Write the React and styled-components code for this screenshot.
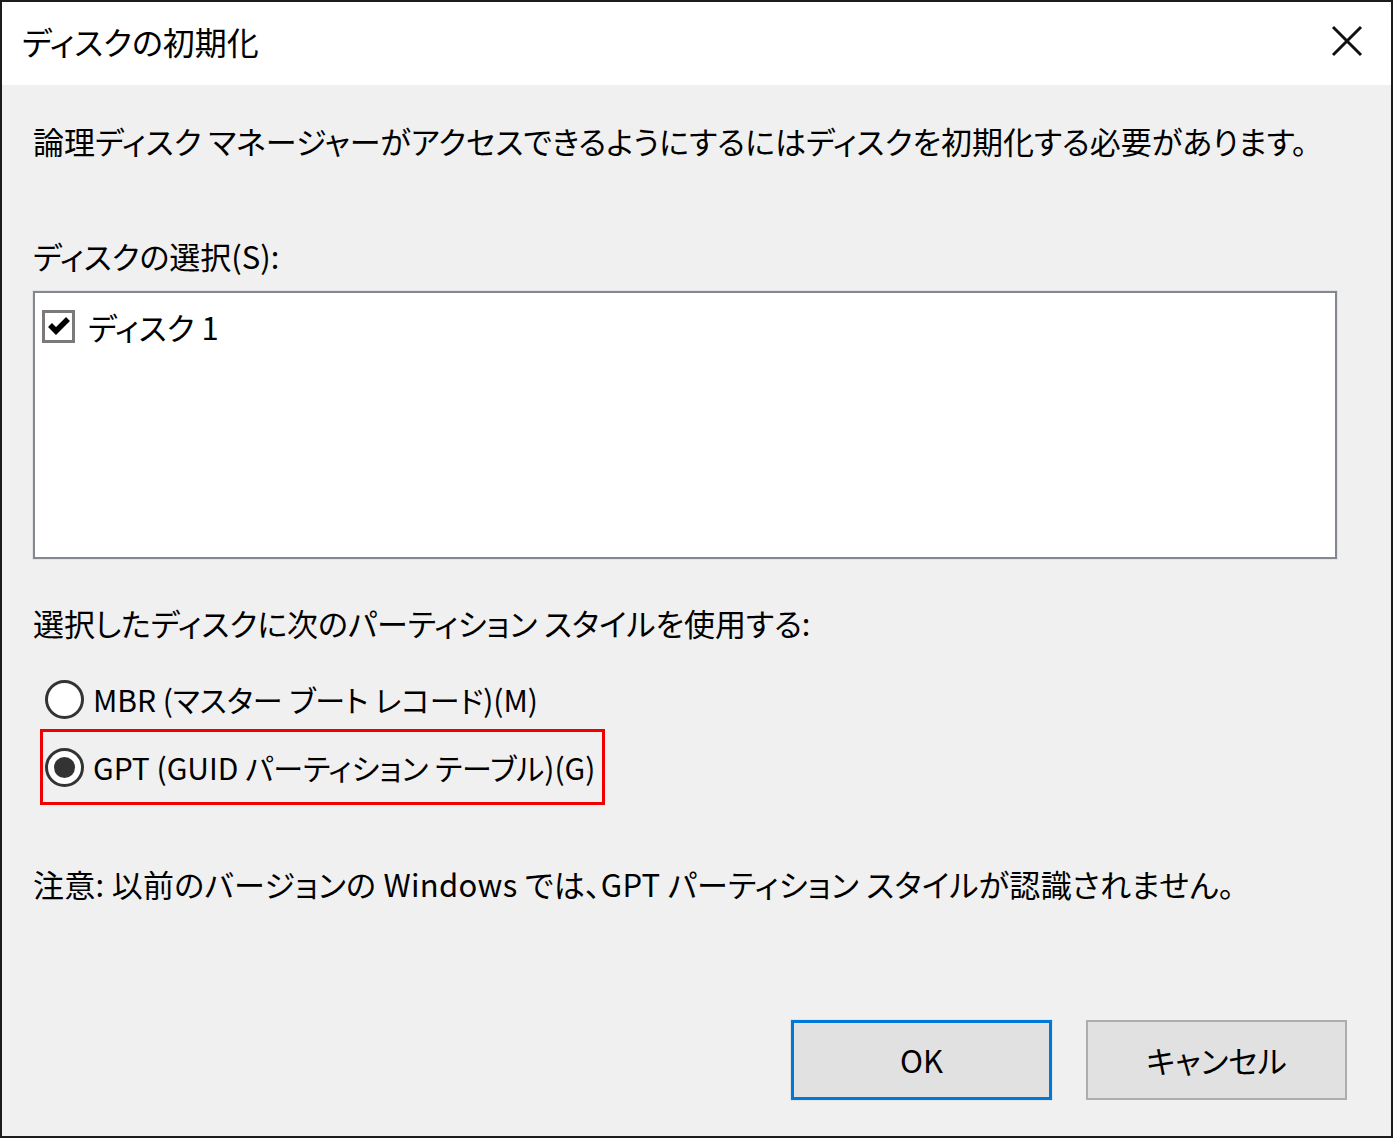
import React from "react";
import styled, { createGlobalStyle } from "styled-components";

const Global = createGlobalStyle`
  html, body { margin: 0; padding: 0; background: #ffffff; }
  * { box-sizing: border-box; }
  body {
    font-family: "Noto Sans CJK JP", "Noto Sans", sans-serif;
    font-feature-settings: "palt";
    color: #000;
  }
`;

const Frame = styled.div`
  width: 1393px;
  height: 1138px;
  border: 2px solid #1c1c1c;
  display: flex;
  flex-direction: column;
  background: #f0f0f0;
`;

const TitleBar = styled.div`
  height: 83px;
  background: #ffffff;
  display: flex;
  align-items: center;
  justify-content: space-between;
  padding: 0 28px 6px 20px;
  flex-shrink: 0;
`;

const Title = styled.div`
  font-size: 32px;
  line-height: 40px;
`;

const CloseIcon = styled.svg`
  width: 32px;
  height: 32px;
  display: block;
`;

const Body = styled.div`
  flex: 1;
  display: flex;
  flex-direction: column;
  padding: 36px 44px 36px 31px;
`;

const Text = styled.div`
  font-size: 31px;
  line-height: 40px;
  margin-top: ${(p) => p.$mt || 0}px;
  letter-spacing: ${(p) => p.$ls || 0}px;
  white-space: nowrap;
`;

const ListBox = styled.div`
  margin-top: 15px;
  width: 1304px;
  height: 268px;
  background: #ffffff;
  border: 2px solid #838890;
  outline: 1px solid #e2e2e2;
  padding: 15px 7px;
`;

const ListItem = styled.div`
  display: flex;
  align-items: center;
  gap: 13px;
  height: 36px;
  font-size: 31px;
`;

const CheckBox = styled.div`
  width: 33px;
  height: 33px;
  border: 3px solid #7a7a7a;
  background: #fff;
  display: flex;
  align-items: center;
  justify-content: center;
`;

const RadioRow = styled.div`
  display: flex;
  align-items: center;
  gap: 9px;
  height: 46px;
  margin-top: ${(p) => p.$mt || 0}px;
  margin-left: ${(p) => p.$ml || 0}px;
  font-size: 30px;
  white-space: nowrap;
`;

const Highlight = styled.div`
  margin-top: 7px;
  margin-left: 7px;
  width: 565px;
  height: 76px;
  border: 3px solid #f00000;
  padding-left: 2px;
  display: flex;
  align-items: center;
`;

const Radio = styled.div`
  width: 39px;
  height: 39px;
  border-radius: 50%;
  border: 3px solid #333333;
  background: #ffffff;
  display: flex;
  align-items: center;
  justify-content: center;
  flex-shrink: 0;
  &::after {
    content: "";
    display: ${(p) => (p.$checked ? "block" : "none")};
    width: 21px;
    height: 21px;
    border-radius: 50%;
    background: #333333;
  }
`;

const ButtonRow = styled.div`
  margin-top: auto;
  display: flex;
  justify-content: flex-end;
  gap: 34px;
`;

const Button = styled.div`
  width: 261px;
  height: 80px;
  background: #e1e1e1;
  border: ${(p) => (p.$primary ? "3px solid #0078d7" : "2px solid #adadad")};
  outline: ${(p) => (p.$primary ? "1px solid #e5e5e5" : "none")};
  display: flex;
  align-items: center;
  justify-content: center;
  font-size: 31px;
  padding-bottom: 2px;
`;

export default function App() {
  return (
    <>
      <Global />
      <Frame>
        <TitleBar>
          <Title>ディスクの初期化</Title>
          <CloseIcon viewBox="0 0 32 32">
            <path d="M2 2 L30 30 M30 2 L2 30" stroke="#111" strokeWidth="3" fill="none" />
          </CloseIcon>
        </TitleBar>
        <Body>
          <Text>論理ディスク マネージャーがアクセスできるようにするにはディスクを初期化する必要があります。</Text>
          <Text $mt={75}>ディスクの選択(S):</Text>
          <ListBox>
            <ListItem>
              <CheckBox>
                <svg width="22" height="20" viewBox="0 0 22 20">
                  <path d="M2 9 L8 15 L20 3" stroke="#000" strokeWidth="5.5" fill="none" strokeLinejoin="miter" />
                </svg>
              </CheckBox>
              <span>ディスク 1</span>
            </ListItem>
          </ListBox>
          <Text $mt={44}>選択したディスクに次のパーティション スタイルを使用する:</Text>
          <RadioRow $mt={33} $ml={12}>
            <Radio />
            <span>MBR (マスター ブート レコード)(M)</span>
          </RadioRow>
          <Highlight>
            <RadioRow>
              <Radio $checked />
              <span>GPT (GUID パーティション テーブル)(G)</span>
            </RadioRow>
          </Highlight>
          <Text $mt={59} $ls={0.3}>注意: 以前のバージョンの Windows では、GPT パーティション スタイルが認識されません。</Text>
          <ButtonRow>
            <Button $primary>OK</Button>
            <Button>キャンセル</Button>
          </ButtonRow>
        </Body>
      </Frame>
    </>
  );
}
